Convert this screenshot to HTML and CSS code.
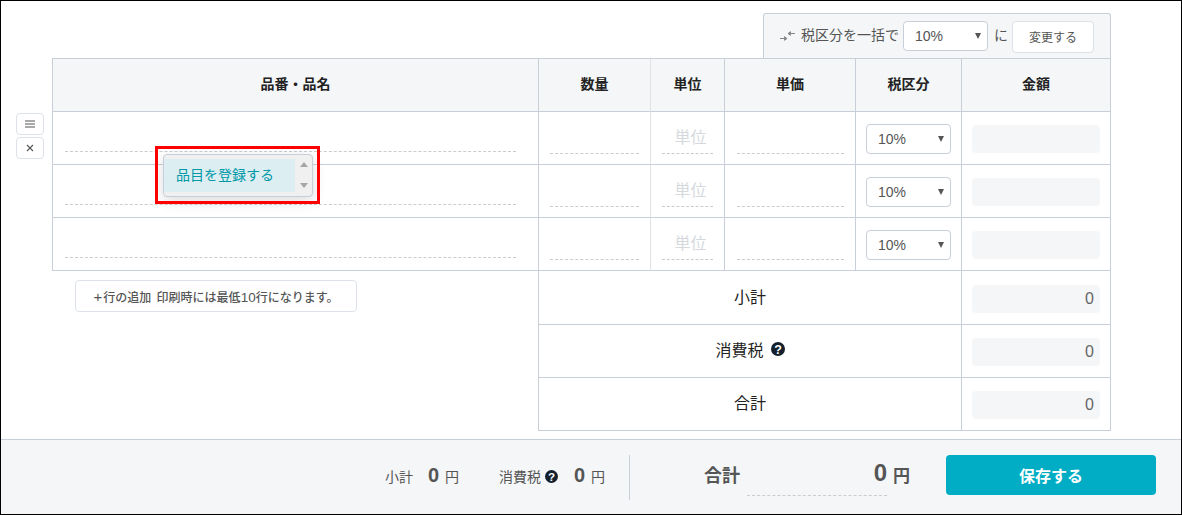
FILE: index.html
```html
<!DOCTYPE html>
<html lang="ja">
<head>
<meta charset="utf-8">
<title>品目</title>
<link rel="stylesheet" href="styles.css">
</head>
<body>
<div class="frame">
  <main class="main">
    <div class="bulk-row">
      <div class="bulk">
        <svg class="bulk-icon" viewBox="0 0 16 10" width="16" height="10"><path d="M0 7.500h6M4.500 5.700L7 7.500 4.500 9.300Z M15 2.500h-6M10.500 0.700L8 2.500l2.500 1.800Z" fill="#888" stroke="#888" stroke-width="1"/></svg>
        <span class="bulk-label">税区分を一括で</span>
        <div class="select bulk-select">10%</div>
        <span class="bulk-ni">に</span>
        <button class="bulk-btn">変更する</button>
      </div>
    </div>
    <div class="editor">
      <div class="side">
        <button class="side-btn"><svg viewBox="0 0 10 8" width="10" height="8"><path d="M0 1h10M0 4h10M0 7h10" stroke="#555" stroke-width="1.100" fill="none"/></svg></button>
        <button class="side-btn"><svg viewBox="0 0 8 8" width="8" height="8"><path d="M1 1l6 6M7 1L1 7" stroke="#555" stroke-width="1.100" fill="none"/></svg></button>
      </div>
      <div class="content">
        <div class="grid">
          <div class="cell head">品番・品名</div>
          <div class="cell head soft">数量</div>
          <div class="cell head">単位</div>
          <div class="cell head">単価</div>
          <div class="cell head">税区分</div>
          <div class="cell head">金額</div>

          <div class="cell name">
            <div class="line"></div>
            <div class="popup">
              <div class="popup-item">品目を登録する</div>
              <div class="popup-scroll"><span class="tri up"></span><span class="tri down"></span></div>
              <div class="highlight"></div>
            </div>
          </div>
          <div class="cell field soft"><div class="line"></div></div>
          <div class="cell field"><div class="line ph">単位</div></div>
          <div class="cell field price"><div class="line"></div></div>
          <div class="cell tax"><div class="select">10%</div></div>
          <div class="cell amount"><div class="amount-box"></div></div>

          <div class="cell name"><div class="line"></div></div>
          <div class="cell field soft"><div class="line"></div></div>
          <div class="cell field"><div class="line ph">単位</div></div>
          <div class="cell field price"><div class="line"></div></div>
          <div class="cell tax"><div class="select">10%</div></div>
          <div class="cell amount"><div class="amount-box"></div></div>

          <div class="cell name"><div class="line"></div></div>
          <div class="cell field soft"><div class="line"></div></div>
          <div class="cell field"><div class="line ph">単位</div></div>
          <div class="cell field price"><div class="line"></div></div>
          <div class="cell tax"><div class="select">10%</div></div>
          <div class="cell amount"><div class="amount-box"></div></div>
        </div>
        <div class="lower">
          <div class="lower-left"><button class="add-btn"><span class="plus">+</span>行の追加 印刷時には最低<span class="digits">10</span>行になります。</button></div>
          <div class="totals">
            <div class="t-label tall">小計</div>
            <div class="t-val tall"><div class="amount-box">0</div></div>
            <div class="t-label">消費税<svg class="q q-main" viewBox="0 0 14 14" width="14" height="14"><circle cx="7" cy="7" r="7" fill="#15202e"/><text x="7" y="11.500" class="q-text">?</text></svg></div>
            <div class="t-val"><div class="amount-box">0</div></div>
            <div class="t-label">合計</div>
            <div class="t-val"><div class="amount-box">0</div></div>
          </div>
        </div>
      </div>
    </div>
  </main>
  <footer class="footer">
    <span class="f-label">小計</span><span class="f-num">0</span><span class="f-yen">円</span>
    <span class="f-label f-tax">消費税<svg class="q q-foot" viewBox="0 0 14 14" width="13" height="13"><circle cx="7" cy="7" r="7" fill="#15202e"/><text x="7" y="11.500" class="q-text">?</text></svg></span><span class="f-num f-num-tax">0</span><span class="f-yen">円</span>
    <div class="f-divider"></div>
    <span class="f-total-label">合計</span>
    <div class="f-total"><span class="f-total-num">0</span></div>
    <span class="f-total-yen">円</span>
    <button class="save">保存する</button>
  </footer>
</div>
</body>
</html>
```
FILE: styles.css
```css
* { box-sizing: border-box; }
html, body { margin: 0; padding: 0; }
body {
  font-family: "Liberation Sans", "Noto Sans CJK JP", sans-serif;
  color: #222;
  background: #fff;
}
button { font-family: inherit; cursor: pointer; }
.frame {
  width: 1182px;
  height: 515px;
  border: 1px solid #000;
  display: flex;
  flex-direction: column;
  overflow: hidden;
}
.main { flex: 1; padding: 12px 70px 0 15px; }
.bulk-row { display: flex; justify-content: flex-end; }
.bulk {
  width: 348px;
  height: 45px;
  display: flex;
  align-items: center;
  padding: 0 0 0 16px;
  background: #f4f6f8;
  border: 1px solid #c8cfd8;
  border-bottom: 0;
  border-radius: 3px 3px 0 0;
  font-size: 14px;
  color: #555;
}
.bulk-icon { margin-right: 5px; }
.bulk-label { margin-right: 4px; margin-bottom: 4px; width: 98px; white-space: nowrap; }
.bulk-ni { margin: 0 4px 4px 6px; }
.bulk-btn {
  width: 82px;
  height: 32px;
  padding: 0;
  margin-top: 1px;
  background: #fff;
  border: 1px solid #dde2e8;
  border-radius: 4px;
  font-size: 12px;
  color: #555;
}
.select {
  position: relative;
  width: 85px;
  height: 30px;
  line-height: 28px;
  padding-left: 11px;
  background: #fff;
  border: 1px solid #c8cfd8;
  border-radius: 4px;
  font-size: 14px;
  color: #555;
}
.select::after {
  content: "";
  position: absolute;
  right: 6px;
  top: 11px;
  border-left: 3.500px solid transparent;
  border-right: 3.500px solid transparent;
  border-top: 6px solid #555;
}
.editor { display: flex; }
.side { width: 36px; padding-top: 55px; display: flex; flex-direction: column; gap: 2px; }
.side-btn {
  width: 28px;
  height: 22px;
  padding: 0;
  display: flex;
  align-items: center;
  justify-content: center;
  background: #fff;
  border: 1px solid #dde2e8;
  border-radius: 4px;
}
.content { width: 1059px; }
.grid {
  display: grid;
  grid-template-columns: 486px 112px 74px 131px 106px 149px;
  grid-auto-rows: 53px;
  border-top: 1px solid #c8cfd8;
  border-left: 1px solid #c8cfd8;
}
.cell { border-right: 1px solid #c8cfd8; border-bottom: 1px solid #c8cfd8; }
.cell.soft { border-right-color: #dfe3e8; }
.head {
  display: flex;
  align-items: center;
  justify-content: center;
  padding-bottom: 4px;
  background: #f4f6f8;
  font-size: 14px;
  font-weight: bold;
  color: #222;
}
.name { position: relative; padding: 0 22px 0 12px; }
.field { padding: 0 11px; }
.price { padding-left: 12px; }
.line { height: 40px; border-bottom: 1px dashed #ccc; }
.field .line { height: 42px; }
.ph {
  padding: 15px 0 0 6px;
  font-size: 16px;
  line-height: 22px;
  color: #d5d9de;
  text-align: center;
}
.tax { padding: 12px 0 0 10px; }
.amount { padding: 13px 10px 0; }
.amount-box {
  height: 28px;
  line-height: 28px;
  padding-right: 6px;
  text-align: right;
  background: #f4f6f8;
  border-radius: 4px;
  font-size: 16px;
  color: #666;
}
.popup {
  position: absolute;
  left: 110px;
  top: 42px;
  width: 150px;
  height: 43px;
  display: flex;
  padding: 4px 0;
  background: #f0f0f0;
  border: 1px solid #c8cfd8;
  border-radius: 4px;
  box-shadow: 0 4px 14px rgba(0, 0, 0, .14);
  z-index: 2;
}
.popup-item {
  width: 131px;
  height: 33px;
  line-height: 33px;
  padding-left: 12px;
  background: #dceef2;
  font-size: 14px;
  color: #0097a7;
}
.popup-scroll {
  flex: 1;
  display: flex;
  flex-direction: column;
  align-items: center;
  justify-content: space-between;
  padding: 3px 0 4px;
}
.tri { width: 0; height: 0; border-left: 4px solid transparent; border-right: 4px solid transparent; }
.tri.up { border-bottom: 5px solid #a6a6a6; }
.tri.down { border-top: 5px solid #a6a6a6; }
.highlight {
  position: absolute;
  left: -9px;
  right: -8px;
  top: -9px;
  bottom: -8px;
  border: 3px solid #f00;
}
.lower { display: flex; }
.lower-left { width: 486px; padding: 9px 0 0 23px; }
.add-btn {
  width: 282px;
  height: 32px;
  padding: 0;
  background: #fff;
  border: 1px solid #dde2e8;
  border-radius: 4px;
  font-size: 12px;
  font-weight: 500;
  word-spacing: 2px;
  color: #555;
}
.plus { margin-right: 1px; font-size: 15px; }
.digits { font-size: 13.500px; }
.totals {
  width: 573px;
  display: grid;
  grid-template-columns: 423px 149px;
  grid-template-rows: 54px 53px 53px;
  border-left: 1px solid #c8cfd8;
}
.t-label, .t-val { border-bottom: 1px solid #c8cfd8; border-right: 1px solid #c8cfd8; }
.t-label {
  display: flex;
  align-items: center;
  justify-content: center;
  padding-bottom: 4px;
  font-size: 16px;
  color: #222;
}
.t-val { padding: 13px 10px 0; }
.t-val.tall { padding-top: 14px; }
.q { display: block; }
.q-main { margin-left: 7px; }
.q-foot { margin-left: 4px; }
.q-text { font: bold 12.500px "Liberation Sans", sans-serif; fill: #fff; text-anchor: middle; }
.footer {
  height: 75px;
  display: flex;
  align-items: center;
  padding: 0 0 4px 384px;
  background: #f4f6f8;
  border-top: 1px solid #c8cfd8;
  color: #555;
}
.f-label { display: flex; align-items: center; font-size: 14px; padding-top: 2px; }
.f-tax { margin-left: 40px; }
.f-num { margin-left: 15px; width: 12px; font-size: 20px; font-weight: bold; }
.f-num-tax { margin-left: 16px; }
.f-yen { margin-left: 5px; font-size: 14px; padding-top: 2px; }
.f-divider { width: 1px; height: 45px; margin: 5px 74px 0 24px; background: #c8cfd8; }
.f-total-label { width: 43px; font-size: 18px; font-weight: bold; margin-bottom: 2px; }
.f-total {
  width: 140px;
  height: 41px;
  text-align: right;
  border-bottom: 1px dashed #ccc;
  line-height: 36px;
}
.f-total-num { font-size: 24px; font-weight: bold; }
.f-total-yen { margin-left: 6px; width: 17px; font-size: 17px; font-weight: bold; margin-bottom: 1px; }
.save {
  width: 210px;
  height: 40px;
  margin-left: 36px;
  padding: 0;
  background: #00adc4;
  border: 0;
  border-radius: 4px;
  color: #fff;
  font-size: 16px;
  font-weight: bold;
}
```
